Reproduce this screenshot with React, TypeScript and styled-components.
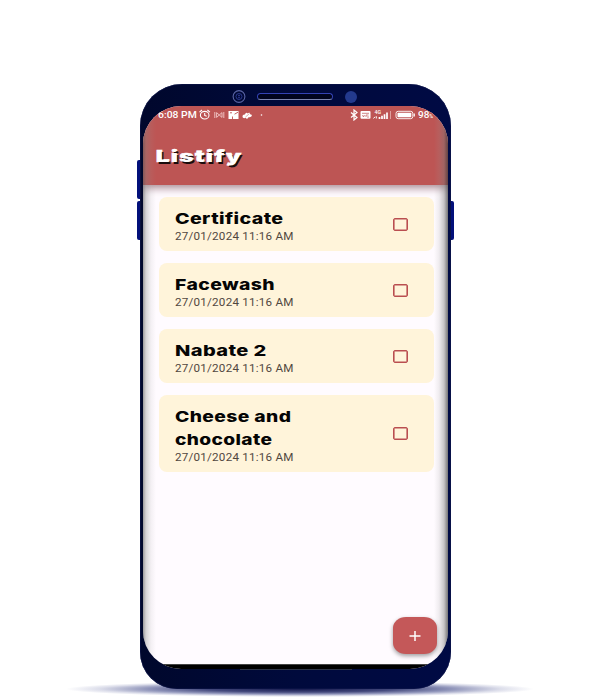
import React from "react";
import styled, { createGlobalStyle } from "styled-components";

const Global = createGlobalStyle`
  * { box-sizing: border-box; }
  html, body { margin: 0; background: #fff; }
`;

const Page = styled.main`
  position: relative;
  width: 590px;
  height: 699px;
  overflow: hidden;
  padding: 84px 0 0 140px;
  font-family: Inter, sans-serif;
`;

const GroundShadow = styled.div`
  position: absolute;
  left: 66px;
  top: 681px;
  width: 468px;
  height: 16px;
  background: radial-gradient(closest-side, #14184c 0%, rgba(48, 54, 111, 0.9) 40%, rgba(70, 78, 140, 0.6) 65%, rgba(120, 126, 175, 0.25) 86%, transparent 100%);
`;

const SideKey = styled.div<{ $x: number; $y: number; $w: number }>`
  position: absolute;
  left: ${(p) => p.$x}px;
  top: ${(p) => p.$y}px;
  width: ${(p) => p.$w}px;
  height: 39px;
  border-radius: 2px;
  background: #02107a;
`;

const Phone = styled.div`
  position: relative;
  width: 310.5px;
  height: 605px;
  padding: 0 2.5px 0 3px;
  border-radius: 42px 42px 37px 37px;
  background: linear-gradient(90deg, #00072c, #000a3c 50%, #000a44);
  box-shadow: inset 0 0 1px 0.5px #10184c;
`;

const SensorBar = styled.div`
  height: 22px;
  padding: 5px 0 0 89px;
  display: flex;
  align-items: flex-start;
`;

const Speaker = styled.div`
  width: 76px;
  height: 7px;
  margin: 4px 12px 0 11px;
  border: 1px solid #3342b4;
  border-bottom-color: #7d86b0;
  border-radius: 4px;
  background: #00041e;
`;

const Sensor = styled.div`
  width: 12px;
  height: 12px;
  margin-top: 1.5px;
  border-radius: 50%;
  background: #233a8e;
`;

const Screen = styled.div`
  position: relative;
  display: flex;
  flex-direction: column;
  height: 562.5px;
  overflow: hidden;
  border-radius: 38px;
  background: #fffbff;
`;

const EdgeShade = styled.div`
  position: absolute;
  inset: 0;
  pointer-events: none;
  background:
    linear-gradient(90deg, rgba(90, 90, 90, 0.6), rgba(130, 130, 130, 0.34) 3px, rgba(150, 150, 150, 0.11) 8px, transparent 13px),
    linear-gradient(270deg, rgba(60, 60, 60, 0.7), rgba(120, 120, 120, 0.42) 4px, rgba(150, 150, 150, 0.15) 9px, transparent 14px);
`;

const Header = styled.header`
  flex: none;
  height: 79px;
  background: #bd5554;
  color: #fff;
  box-shadow: 0 2px 8px 1px rgba(110, 65, 75, 0.6);
`;

const StatusBar = styled.div`
  display: flex;
  justify-content: space-between;
  height: 17px;
  padding: 3px 14px 0 15px;
  font: 500 9.8px/12px Roboto, sans-serif;
`;

const StatusGroup = styled.div`
  display: flex;
  align-items: center;
  height: 12px;
`;

const Stretch = styled.span<{ $scale: number; $width?: number }>`
  display: block;
  width: ${(p) => (p.$width ? `${p.$width}px` : "auto")};
  white-space: nowrap;
  transform: scaleX(${(p) => p.$scale});
  transform-origin: 0 50%;
`;

const Percent = styled.span`
  font-size: 5px;
  line-height: 1;
`;

const Brand = styled.h1`
  margin: 22px 0 0 12.5px;
  font: 900 16.5px/22px Inter, sans-serif;
  letter-spacing: 1px;
  -webkit-text-stroke: 0.7px #fff;
  paint-order: stroke fill;
  text-shadow: 1px 1.5px 0 #1a0c0c;
`;

const List = styled.ul`
  display: flex;
  flex: 1;
  flex-direction: column;
  gap: 12px;
  margin: 0;
  padding: 12px 14.5px 0 16px;
  list-style: none;
`;

const Card = styled.li`
  display: flex;
  align-items: center;
  justify-content: space-between;
  padding: 10px 25.5px 7px 16px;
  border-radius: 8px;
  background: #fff4da;
`;

const Title = styled.h2`
  margin: 0;
  color: #050505;
  font: 800 15.2px/23px Inter, sans-serif;
  letter-spacing: 0.3px;
`;

const Stamp = styled.time`
  display: block;
  color: #51473f;
  font: 400 10.7px/14px Roboto, sans-serif;
  letter-spacing: 0.2px;
`;

const Checkbox = styled.button`
  width: 15.5px;
  height: 13px;
  padding: 0;
  margin-top: -3px;
  border: 1px solid #ba4e50;
  border-radius: 2px;
  background: transparent;
  box-shadow: inset 0 0 0 0.6px #ba4e50;
`;

const AddButton = styled.button`
  position: absolute;
  right: 11.5px;
  bottom: 14.5px;
  display: grid;
  place-items: center;
  width: 44px;
  height: 37px;
  padding: 0;
  border: 0;
  border-radius: 13px / 11px;
  background: #c45859;
  box-shadow: 0 2px 4px rgba(0, 0, 0, 0.38);
`;

const NavStrip = styled.div`
  flex: none;
  height: 4.5px;
  border-top: 1px solid #444;
  background: #000;
`;

const BottomSeam = styled.div`
  width: 112px;
  height: 1px;
  margin-left: 97px;
  background: #303648;
`;

type Line = { text: string; scale: number };
const items: { lines: Line[] }[] = [
  { lines: [{ text: "Certificate", scale: 1.29 }] },
  { lines: [{ text: "Facewash", scale: 1.275 }] },
  { lines: [{ text: "Nabate 2", scale: 1.32 }] },
  { lines: [{ text: "Cheese and", scale: 1.27 }, { text: "chocolate", scale: 1.26 }] },
];

const StatusIcons = () => (
  <svg width="68" height="12" viewBox="0 0 68 12" fill="none" stroke="#fff" strokeWidth="1.1">
    <ellipse cx="5.7" cy="6.2" rx="4.3" ry="3.8" />
    <path d="M5.7 4v2.4l2 .8M.5 3.2 3 1M10.900 3.200 8.400 1" />
    <g stroke="#f3c9c8" strokeWidth=".9">
      <path d="M15.800 3v6M24.800 3v6M17.600 3.600v4.800l2.700-2.400 2.700 2.400V3.600L20.300 6z" />
    </g>
    <path d="M29.500 2h10v8h-10z" fill="#fff" stroke="none" />
    <path d="M31 3.800h2M35.500 5.200l3.500-2M33.500 10V7.500" stroke="#bd5554" strokeWidth=".9" />
    <path d="M43.500 7.600c0-2 2-2 2.500-2 .4-2 2-2.600 2.600-1 1.400-1.600 2.800-.6 2.400.6 2.200 0 2.400 1.700 1 2.600-1 .6-2 .2-2.600.4-.4 1.600-2 2.200-2.800.6-1 .6-3.100.6-3.100-1.200Z" fill="#fff" stroke="none" />
    <path d="m46.500 8 4-3.500" stroke="#bd5554" strokeWidth=".5" />
    <circle cx="62.500" cy="6" r=".8" fill="#fff" stroke="none" />
  </svg>
);

const SignalIcons = () => (
  <svg width="68" height="12" viewBox="0 0 68 12" fill="none" stroke="#fff">
    <path d="m1 3.500 6 5L4 11V1l3 2.500-6 5" strokeWidth="1.200" />
    <rect x="10.500" y="2" width="10" height="7.800" rx="1" fill="#fff" stroke="none" />
    <path d="M12 4.300h7M12.500 6l1 2 1-2M16 8V6h2.500M17 8h2" stroke="#bd5554" strokeWidth=".7" />
    <text x="24.500" y="5" fill="#fff" stroke="none" fontFamily="Roboto, sans-serif" fontSize="5.200">4G</text>
    <path d="M23.500 9.500 25 7.800M26.300 9.500V7.300" strokeWidth="1" />
    <path d="M29.500 10V8M32 10V6.700M34.500 10V5.200M37 10V3.500" strokeWidth="1.700" />
    <path d="M40.500 10V2" stroke="#dfa09e" strokeWidth="1" />
    <rect x="46" y="2.300" width="16.800" height="7.400" rx="2.200" strokeWidth=".9" />
    <rect x="47.500" y="3.700" width="13.800" height="4.600" rx=".8" fill="#fff" stroke="none" />
    <path d="M64.200 4.500v3" strokeWidth="1.300" />
  </svg>
);

export default function App() {
  return (
    <>
      <Global />
      <Page>
        <GroundShadow />
        <SideKey $x={137} $y={160} $w={5} />
        <SideKey $x={137} $y={201} $w={5} />
        <SideKey $x={448} $y={201} $w={6} />
        <Phone>
          <SensorBar>
            <svg width="14" height="15" viewBox="0 0 14 15" fill="none" stroke="#34429f">
              <circle cx="7" cy="7.500" r="5.900" stroke="#5965a5" strokeWidth="1.100" />
              <circle cx="7" cy="7.500" r="3" strokeWidth=".8" />
              <circle cx="7" cy="6.600" r=".5" />
              <circle cx="7" cy="8.700" r=".4" />
            </svg>
            <Speaker />
            <Sensor />
          </SensorBar>
          <Screen>
            <Header>
              <StatusBar>
                <StatusGroup>
                  <Stretch $scale={1.06} $width={40.5}>6:08 PM</Stretch>
                  <StatusIcons />
                </StatusGroup>
                <StatusGroup>
                  <SignalIcons />
                  <Stretch $scale={1.02} $width={16}>98<Percent>%</Percent></Stretch>
                </StatusGroup>
              </StatusBar>
              <Brand><Stretch $scale={1.45} $width={90}>Listify</Stretch></Brand>
            </Header>
            <List>
              {items.map((item) => (
                <Card key={item.lines[0].text}>
                  <div>
                    <Title>
                      {item.lines.map((l) => (
                        <Stretch key={l.text} $scale={l.scale} $width={100}>{l.text}</Stretch>
                      ))}
                    </Title>
                    <Stamp><Stretch $scale={1.09} $width={110}>27/01/2024 11:16 AM</Stretch></Stamp>
                  </div>
                  <Checkbox aria-label="Mark done" />
                </Card>
              ))}
            </List>
            <NavStrip />
            <EdgeShade />
            <AddButton aria-label="Add item">
              <svg width="12" height="10" viewBox="0 0 12 10" stroke="#fff" strokeWidth="1.5">
                <path d="M.5 5h11M6 0v10" />
              </svg>
            </AddButton>
          </Screen>
          <BottomSeam />
        </Phone>
      </Page>
    </>
  );
}
